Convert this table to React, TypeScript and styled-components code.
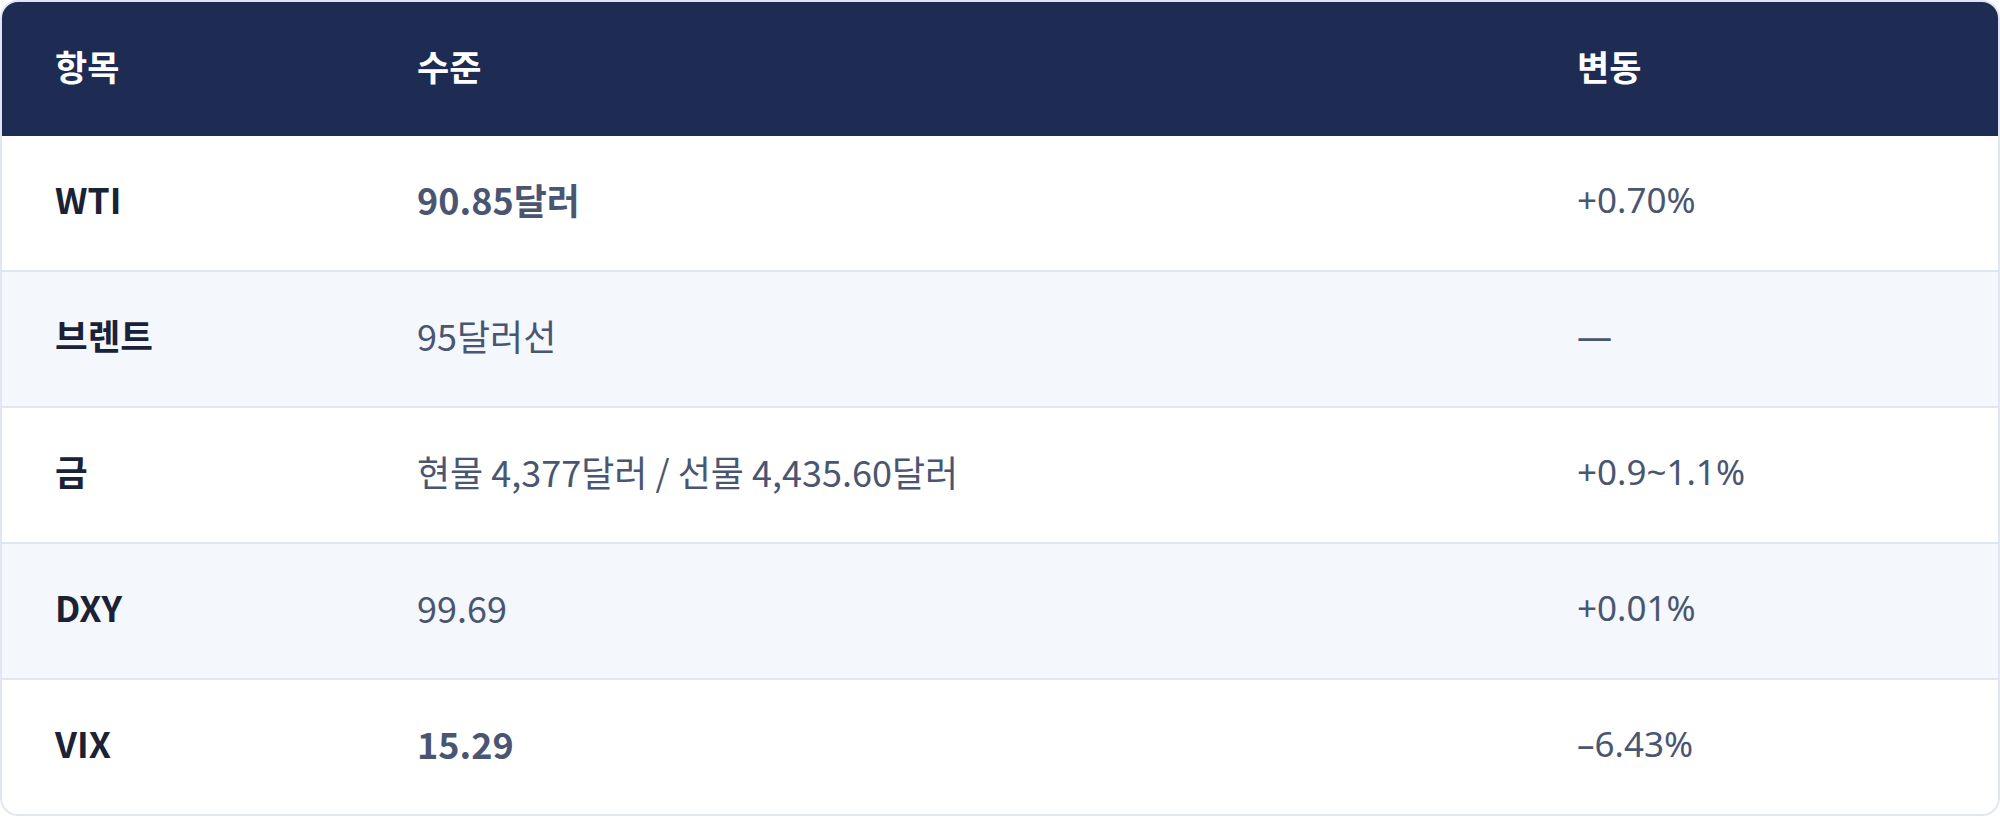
import styled, { createGlobalStyle } from 'styled-components';

const GlobalStyle = createGlobalStyle`
  html, body {
    margin: 0;
    padding: 0;
    background: #ffffff;
  }
  body {
    font-family: 'Noto Sans CJK KR', 'Noto Sans', sans-serif;
  }
`;

const Table = styled.div`
  width: 2000px;
  box-sizing: border-box;
  border: 2px solid #e1e6f0;
  border-radius: 18px;
  overflow: hidden;
  background: #fff;
`;

const Row = styled.div<{ $alt?: boolean; $head?: boolean; $last?: boolean }>`
  display: grid;
  grid-template-columns: 362px 1160px 1fr;
  align-items: center;
  height: 134px;
  background: ${p => (p.$head ? '#1e2b53' : p.$alt ? '#f4f7fc' : '#ffffff')};
  border-bottom: ${p => (p.$head || p.$last ? 'none' : '2px solid #dfe5f1')};
`;

const Cell = styled.div`
  padding-left: 53px;
  padding-bottom: 8px;
  line-height: 1;
  white-space: nowrap;
`;

const HeadCell = styled(Cell)`
  color: #ffffff;
  font-family: 'Noto Sans CJK KR', sans-serif;
  font-weight: 700;
  font-size: 35px;
`;

const NameCell = styled(Cell)`
  color: #1b2236;
  font-family: 'Noto Sans CJK KR', sans-serif;
  font-weight: 700;
  font-size: 35.5px;
`;

const LevelCell = styled(Cell)<{ $strong?: boolean }>`
  color: #4a5671;
  font-family: 'Noto Sans CJK KR', sans-serif;
  font-weight: ${p => (p.$strong ? 700 : 400)};
  font-size: 36px;
`;

const ChangeCell = styled(Cell)`
  color: #4a5671;
  font-family: 'Noto Sans', sans-serif;
  font-size: 35px;
`;

const rows = [
  { name: 'WTI', level: '90.85달러', strong: true, change: '+0.70%' },
  { name: '브렌트', level: '95달러선', strong: false, change: '—' },
  { name: '금', level: '현물 4,377달러 / 선물 4,435.60달러', strong: false, change: '+0.9~1.1%' },
  { name: 'DXY', level: '99.69', strong: false, change: '+0.01%' },
  { name: 'VIX', level: '15.29', strong: true, change: '–6.43%' },
];

export default function App() {
  return (
    <>
      <GlobalStyle />
      <Table>
        <Row $head>
          <HeadCell>항목</HeadCell>
          <HeadCell>수준</HeadCell>
          <HeadCell>변동</HeadCell>
        </Row>
        {rows.map((r, i) => (
          <Row key={r.name} $alt={i % 2 === 1} $last={i === rows.length - 1}>
            <NameCell>{r.name}</NameCell>
            <LevelCell $strong={r.strong}>{r.level}</LevelCell>
            <ChangeCell>{r.change}</ChangeCell>
          </Row>
        ))}
      </Table>
    </>
  );
}
